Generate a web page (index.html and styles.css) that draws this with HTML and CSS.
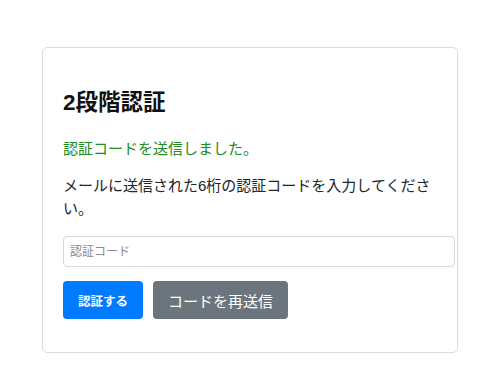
FILE: index.html
```html
<!DOCTYPE html>
<html lang="ja">
<head>
<meta charset="utf-8">
<title>2段階認証</title>
<link rel="stylesheet" href="styles.css">
</head>
<body>
<div class="card">
  <h2 class="title">2段階認証</h2>
  <p class="success">認証コードを送信しました。</p>
  <p class="desc">メールに送信された6桁の認証コードを入力してください。</p>
  <input class="code-input" type="text" placeholder="認証コード">
  <div class="actions">
    <button class="btn btn-primary" type="button">認証する</button>
    <button class="btn btn-secondary" type="button">コードを再送信</button>
  </div>
</div>
</body>
</html>
```

FILE: styles.css
```css
html, body {
  margin: 0;
  padding: 0;
  background: #fff;
}
body {
  font-family: "Liberation Sans", "Noto Sans CJK JP", sans-serif;
  font-size: 15px;
  line-height: 1.5;
  color: #212529;
}
.card {
  box-sizing: border-box;
  width: 416px;
  margin: 47px auto 0;
  padding: 20px 20px 33px;
  border: 1px solid #dcdcdc;
  border-radius: 5px;
}
.title {
  font-size: 22.5px;
  font-weight: bold;
  color: #111;
  margin: 18px 0 18px;
  line-height: 1.5;
}
.success {
  color: #218a21;
  margin: 0 0 15px;
}
.desc {
  margin: 0 0 16px;
}
.code-input {
  display: block;
  width: 100%;
  box-sizing: content-box;
  height: 29px;
  padding: 0 10px 0 6px;
  border: 1px solid #d9d9d9;
  border-radius: 4px;
  font-family: "Liberation Sans", "Noto Sans CJK JP", sans-serif;
  font-size: 12px;
  color: #333;
  margin: 0 0 14px;
  outline: none;
}
.code-input::placeholder {
  color: #8a8a8a;
}
.actions {
  display: flex;
  gap: 10px;
}
.btn {
  height: 38px;
  border: none;
  border-radius: 4px;
  color: #fff;
  font-family: "Liberation Sans", "Noto Sans CJK JP", sans-serif;
  padding: 0 15px;
  cursor: pointer;
}
.btn-primary {
  background: #007bff;
  font-size: 12.5px;
  width: 80px;
  padding: 0;
  font-weight: bold;
}
.btn-secondary {
  background: #6c757d;
  font-size: 15px;
}
```
